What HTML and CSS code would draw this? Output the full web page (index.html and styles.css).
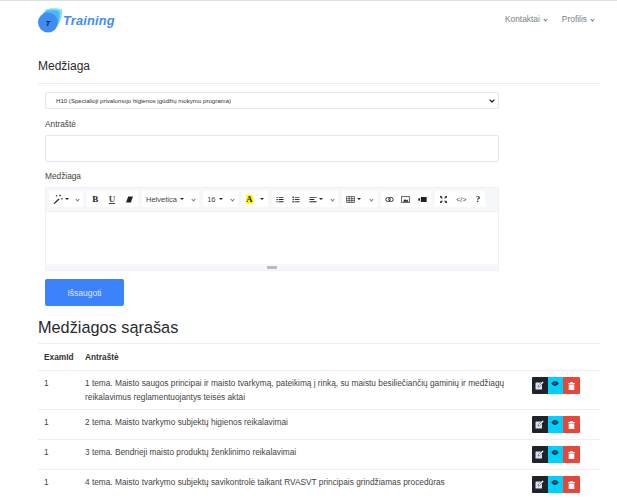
FILE: index.html
```html
<!DOCTYPE html>
<html lang="lt">
<head>
<meta charset="utf-8">
<title>Training</title>
<link rel="stylesheet" href="styles.css">
</head>
<body>
<header class="topbar">
  <a class="logo">
    <svg class="logo-mark" width="24" height="25" viewBox="0 0 24 25">
      <path d="M7 2 C11 -0.500 21 -0.500 24 2 C24.500 9 22 16 18 19 L8 12Z" fill="#7fdcfb"/>
      <path d="M5 5 C9 1.500 18 1 21.500 4 C22.500 10 20 17 16 20 L6 14Z" fill="#4cb8f8"/>
      <circle cx="10" cy="14.500" r="10" fill="#3f8cf5"/>
      <text x="10" y="17.500" class="logo-t">T</text>
    </svg>
    <span class="logo-text">Training</span>
  </a>
  <nav class="menu">
    <span class="menu-item">Kontaktai <i class="chev"></i></span>
    <span class="menu-item">Profilis <i class="chev"></i></span>
  </nav>
</header>
<main class="page">
  <h2 class="title">Medžiaga</h2>
  <form class="form">
    <select class="select"><option>H10 (Specialioji privalomojo higienos įgūdžių mokymo programa)</option></select>
    <label class="label">Antraštė</label>
    <input class="input" type="text">
    <label class="label">Medžiaga</label>
    <div class="editor">
      <div class="toolbar">
        <div class="group g1">
          <button type="button" class="tb">
            <svg width="10" height="10" viewBox="0 0 10 10"><path d="M0.500 9.500 L5.500 4.500 L6.500 5.500 L1.500 10Z" fill="#222"/><path d="M7 0.500v2M6 1.500h2M9 4v1.500M8.300 4.700h1.500M3.500 1v1.500M2.800 1.700h1.500" stroke="#444" stroke-width=".8"/></svg>
            <i class="caret"></i></button>
          <button type="button" class="tb"><i class="chev"></i></button>
        </div>
        <div class="group g2">
          <button type="button" class="tb b">B</button>
          <button type="button" class="tb u">U</button>
          <button type="button" class="tb">
            <svg width="7" height="7" viewBox="0 0 8 8"><path d="M2.500 .5H8L5.500 7.500H0Z" fill="#222"/></svg>
          </button>
        </div>
        <div class="group g3">
          <button type="button" class="tb txt">Helvetica <i class="caret"></i></button>
          <button type="button" class="tb"><i class="chev"></i></button>
        </div>
        <div class="group g4">
          <button type="button" class="tb txt">16 <i class="caret"></i></button>
          <button type="button" class="tb"><i class="chev"></i></button>
        </div>
        <div class="group g5">
          <button type="button" class="tb"><span class="hilite">A</span></button>
          <button type="button" class="tb"><i class="caret"></i></button>
        </div>
        <div class="group g6">
          <button type="button" class="tb"><svg width="8" height="7" viewBox="0 0 8 8"><path d="M0 1h1.500v1H0zM0 3.500h1.500v1H0zM0 6h1.500v1H0zM2.500 1H8v1H2.500zM2.500 3.500H8v1H2.500zM2.500 6H8v1H2.500z" fill="#222"/></svg></button>
          <button type="button" class="tb"><svg width="8" height="7" viewBox="0 0 8 8"><path d="M0 .5h1.500v2H0zM0 3.500h1.500v1H0zM0 5.500h1.500v2H0zM2.500 1H8v1H2.500zM2.500 3.500H8v1H2.500zM2.500 6H8v1H2.500z" fill="#333"/></svg></button>
          <button type="button" class="tb"><svg width="8" height="7" viewBox="0 0 8 8"><path d="M0 1h8v1H0zM0 3.500h5.500v1H0zM0 6h8v1H0z" fill="#222"/></svg> <i class="caret"></i></button>
          <button type="button" class="tb"><i class="chev"></i></button>
        </div>
        <div class="group g7">
          <button type="button" class="tb"><svg width="9" height="7" viewBox="0 0 10 8"><path d="M.5.500h9v7h-9zM.5 3h9M.5 5.300h9M3.500.5v7M6.500.5v7" fill="none" stroke="#333" stroke-width=".8"/></svg> <i class="caret"></i></button>
          <button type="button" class="tb"><i class="chev"></i></button>
        </div>
        <div class="group g8">
          <button type="button" class="tb"><svg width="9" height="5" viewBox="0 0 10 6"><rect x=".6" y=".6" width="5.200" height="4.800" rx="2.200" fill="none" stroke="#222" stroke-width="1.100"/><rect x="4.200" y=".6" width="5.200" height="4.800" rx="2.200" fill="none" stroke="#222" stroke-width="1.100"/></svg></button>
          <button type="button" class="tb"><svg width="9" height="7" viewBox="0 0 10 8"><path d="M.5.500h9v7h-9z" fill="none" stroke="#333" stroke-width=".9"/><path d="M2 6.500 L4.500 3.500 L6 5 L7 4 L8.500 6.500Z" fill="#222"/></svg></button>
          <button type="button" class="tb"><svg width="9" height="5" viewBox="0 0 10 6"><path d="M3 0h7v6H3zM0 1.500h2v3H0z" fill="#222"/></svg></button>
        </div>
        <div class="group g9">
          <button type="button" class="tb"><svg width="7" height="7" viewBox="0 0 8 8"><path d="M0 0h2.500L1.800 .8 3.200 2.200 2.200 3.200 .8 1.800 0 2.500zM8 0v2.500L7.200 1.800 5.800 3.200 4.800 2.200 6.200 .8 5.500 0zM0 8V5.500L.8 6.200 2.200 4.800 3.200 5.800 1.800 7.200 2.500 8zM8 8H5.500L6.200 7.200 4.800 5.800 5.800 4.800 7.200 6.200 8 5.500z" fill="#333"/></svg></button>
          <button type="button" class="tb code">&lt;/&gt;</button>
          <button type="button" class="tb b">?</button>
        </div>
      </div>
      <div class="editable"></div>
      <div class="statusbar"><span class="grip"></span></div>
    </div>
    <button type="button" class="save">Išsaugoti</button>
  </form>
  <h3 class="list-title">Medžiagos sąrašas</h3>
  <table class="table">
    <thead>
      <tr><th class="col-id">ExamId</th><th>Antraštė</th><th class="col-actions"></th></tr>
    </thead>
    <tbody>
      <tr class="tall">
        <td>1</td>
        <td>1 tema. Maisto saugos principai ir maisto tvarkymą, pateikimą į rinką, su maistu besiliečiančių gaminių ir medžiagų reikalavimus reglamentuojantys teisės aktai</td>
        <td><div class="actions">
          <a class="act dark"><svg width="9" height="9" viewBox="0 0 9 9"><use href="#i-edit"/></svg></a><a class="act cyan"><svg width="8" height="5" viewBox="0 0 9 6"><use href="#i-eye"/></svg></a><a class="act red"><svg width="7" height="8" viewBox="0 0 7 8"><use href="#i-trash"/></svg></a>
        </div></td>
      </tr>
      <tr>
        <td>1</td>
        <td>2 tema. Maisto tvarkymo subjektų higienos reikalavimai</td>
        <td><div class="actions">
          <a class="act dark"><svg width="9" height="9" viewBox="0 0 9 9"><use href="#i-edit"/></svg></a><a class="act cyan"><svg width="8" height="5" viewBox="0 0 9 6"><use href="#i-eye"/></svg></a><a class="act red"><svg width="7" height="8" viewBox="0 0 7 8"><use href="#i-trash"/></svg></a>
        </div></td>
      </tr>
      <tr>
        <td>1</td>
        <td>3 tema. Bendrieji maisto produktų ženklinimo reikalavimai</td>
        <td><div class="actions">
          <a class="act dark"><svg width="9" height="9" viewBox="0 0 9 9"><use href="#i-edit"/></svg></a><a class="act cyan"><svg width="8" height="5" viewBox="0 0 9 6"><use href="#i-eye"/></svg></a><a class="act red"><svg width="7" height="8" viewBox="0 0 7 8"><use href="#i-trash"/></svg></a>
        </div></td>
      </tr>
      <tr class="last">
        <td>1</td>
        <td>4 tema. Maisto tvarkymo subjektų savikontrolė taikant RVASVT principais grindžiamas procedūras</td>
        <td><div class="actions">
          <a class="act dark"><svg width="9" height="9" viewBox="0 0 9 9"><use href="#i-edit"/></svg></a><a class="act cyan"><svg width="8" height="5" viewBox="0 0 9 6"><use href="#i-eye"/></svg></a><a class="act red"><svg width="7" height="8" viewBox="0 0 7 8"><use href="#i-trash"/></svg></a>
        </div></td>
      </tr>
    </tbody>
  </table>
</main>
<svg class="defs" width="0" height="0">
  <defs>
    <g id="i-edit"><rect x=".5" y="1.500" width="6.500" height="7" rx=".6" fill="#d8e2f2"/><path d="M3 6l.4-1.600L7.600.3 8.800 1.500 4.600 5.600Z" fill="#fff" stroke="#1f2227" stroke-width=".5"/></g>
    <g id="i-eye"><path d="M0 3C1.500 1 3 0 4.500 0S7.500 1 9 3C7.500 5 6 6 4.500 6S1.500 5 0 3Z" fill="#1d3a45"/><circle cx="4.500" cy="3" r="1.300" fill="#0a7f99"/></g>
    <g id="i-trash"><path d="M0 1h2.200V0h2.600v1H7v1H0zM.7 2.600h5.600V8H.7z" fill="#fff"/></g>
  </defs>
</svg>
</body>
</html>
```
FILE: styles.css
```css
* { box-sizing: border-box; }
html, body { margin: 0; padding: 0; }
body {
  background: #fff;
  color: #333;
  font-family: "Liberation Sans", Arial, sans-serif;
  font-size: 8.300px;
  height: 502px;
  overflow: hidden;
  border-top: 1px solid #e0e0e0;
}
.defs { position: absolute; }
.topbar {
  height: 39px;
  padding: 7px 23px 0 38px;
  display: flex;
  justify-content: space-between;
  align-items: flex-start;
}
.logo { display: flex; align-items: center; gap: 1px; }
.logo-t { font: italic 700 8px "Liberation Sans", sans-serif; fill: #123; text-anchor: middle; }
.logo-text {
  font-family: "Liberation Sans", sans-serif;
  font-style: italic;
  font-weight: 700;
  font-size: 12.800px;
  color: #3d8df5;
  letter-spacing: 0.200px;
}
.menu { display: flex; gap: 15px; margin-top: 6px; }
.menu-item { color: #7b8085; font-size: 8.400px; display: flex; align-items: center; gap: 4px; }
.chev {
  display: inline-block;
  width: 3px;
  height: 3px;
  border-right: 0.800px solid #777;
  border-bottom: 0.800px solid #777;
  transform: rotate(45deg);
}
.caret {
  display: inline-block;
  width: 0;
  height: 0;
  border-left: 2px solid transparent;
  border-right: 2px solid transparent;
  border-top: 2.500px solid #222;
  vertical-align: middle;
}
.page { padding: 0 17px 0 38px; }
.title {
  margin: 0;
  padding: 18px 0 9px;
  height: 44px;
  font-size: 12px;
  font-weight: 400;
  line-height: 17px;
  color: #2a2a2a;
  border-bottom: 1px solid #eee;
}
.form { padding: 8px 0 0 7px; width: 461px; display: flex; flex-direction: column; }
.select {
  appearance: none;
  height: 17px;
  width: 454px;
  border: 1px solid #e3e6ea;
  border-radius: 2px;
  background: #fff url("data:image/svg+xml,%3Csvg xmlns='http://www.w3.org/2000/svg' width='6' height='4' viewBox='0 0 6 4'%3E%3Cpath d='M.6.6 3 3l2.400-2.400' fill='none' stroke='%23222' stroke-width='1.300'/%3E%3C/svg%3E") no-repeat right 3px center;
  color: #333;
  font: 6.100px "Liberation Sans", sans-serif;
  padding: 0 10px;
}
.label { margin-top: 10px; font-size: 8.300px; line-height: 11px; color: #444; margin-bottom: 5px; }
.input {
  height: 27px;
  width: 454px;
  border: 1px solid #e3e6ea;
  border-radius: 2px;
  background: #fff;
}
.input + .label { margin-top: 9px; margin-bottom: 5px; }
.editor { width: 454px; height: 84px; border: 1px solid #eef0f5; display: flex; flex-direction: column; }
.toolbar {
  height: 24px;
  background: #f6f7fb;
  border-bottom: 1px solid #eef0f5;
  padding: 3px 0 0 3px;
  display: flex;
  gap: 4px;
}
.group { display: flex; justify-content: space-around; background: #fff; height: 16px; flex: none; }
.g1 { width: 34px; }
.g2 { width: 51px; }
.g3 { width: 57px; }
.g4 { width: 35px; }
.g5 { width: 26px; }
.g6 { width: 66px; }
.g7 { width: 35px; }
.g8 { width: 50px; }
.g9 { width: 50px; }
.tb {
  border: 0;
  background: transparent;
  padding: 0;
  height: 16px;
  display: flex;
  align-items: center;
  justify-content: center;
  gap: 2px;
  color: #222;
  font: 7.500px "Liberation Sans", sans-serif;
}
.tb.txt { color: #444; gap: 3px; }
.tb.b { font: 700 9px "Liberation Serif", serif; }
.tb.u { font: 700 9px "Liberation Serif", serif; text-decoration: underline; color: #444; }
.tb.code { color: #444; font-size: 7px; }
.hilite { background: #ffff00; color: #111; font: 700 8.500px "Liberation Serif", serif; width: 7px; height: 9px; line-height: 9px; display: block; text-align: center; }
.editable { flex: 1; background: #fff; }
.statusbar { height: 6px; background: #f6f7fb; display: flex; justify-content: center; align-items: center; }
.grip { width: 10px; height: 3px; background: #bbb; }
.save {
  margin-top: 8px;
  width: 79px;
  height: 27px;
  border: 0;
  border-radius: 2px;
  background: #3c82fb;
  color: #dfe9ff;
  font: 8.500px "Liberation Sans", sans-serif;
}
.list-title {
  margin: 0;
  padding-top: 10px;
  height: 38px;
  font-size: 16.300px;
  line-height: 22px;
  font-weight: 400;
  color: #2a2a2a;
  border-bottom: 1px solid #eef0f5;
}
.table { border-collapse: collapse; width: 562px; table-layout: fixed; }
.table th {
  text-align: left;
  font-size: 8.300px;
  font-weight: 700;
  color: #333;
  height: 26px;
  padding: 0 0 0 6px;
  border-bottom: 1px solid #eee;
}
.col-id { width: 41px; }
.col-actions { width: 68px; }
.table td {
  vertical-align: top;
  padding: 5px 0 0 6px;
  height: 30px;
  line-height: 14px;
  color: #444;
  border-bottom: 1px solid #eee;
}
.table tr.tall td { height: 39px; }
.table tr.last td { border-bottom: 0; }
.table td:last-child { padding-top: 6px; padding-left: 0; }
.actions { display: flex; }
.act { width: 15.500px; height: 17px; display: flex; align-items: center; justify-content: center; }
.dark { background: #1f2227; border-radius: 1px 0 0 1px; }
.cyan { background: #00d0ff; padding-bottom: 3px; }
.red { background: #e7463a; border-radius: 0 1px 1px 0; padding-top: 1px; width: 16.500px; }
```
